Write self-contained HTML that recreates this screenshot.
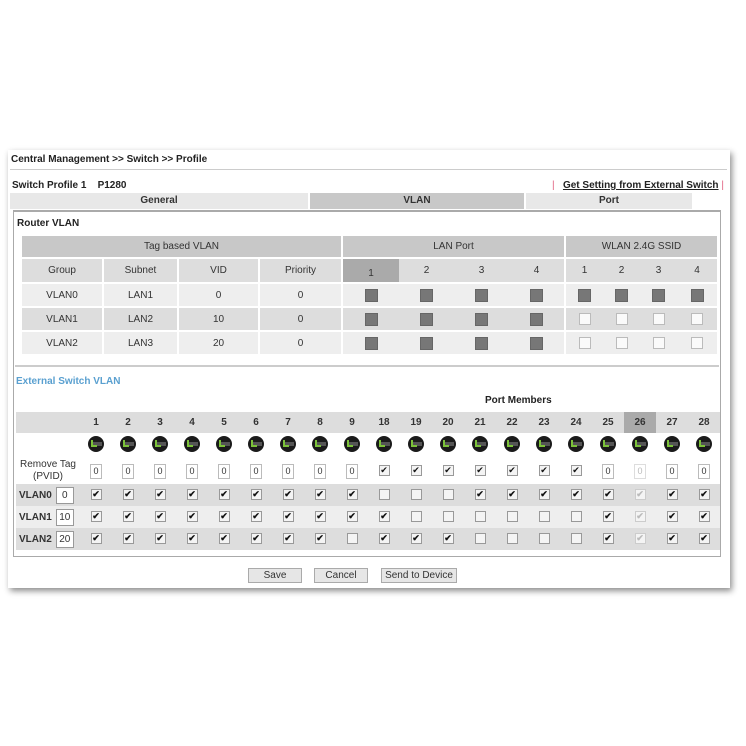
<!DOCTYPE html>
<html><head><meta charset="utf-8"><style>
*{box-sizing:border-box;margin:0;padding:0}
body{width:746px;height:746px;background:#fff;font-family:"Liberation Sans",sans-serif;font-size:10px;color:#333;position:relative;overflow:hidden}
.panel{position:absolute;left:8px;top:150px;width:722px;height:438px;background:#fff;box-shadow:2px 3px 6px rgba(0,0,0,.45)}
.a{position:absolute}
.bold{font-weight:bold;color:#222}
.tab{position:absolute;top:193px;height:16px;text-align:center;font-weight:bold;line-height:16px;color:#333}
.rv{border-collapse:separate;border-spacing:0;table-layout:fixed}
.rv td{text-align:center;height:24px;background:#eee;border-bottom:2px solid #fff;border-right:2px solid #fff;padding:0}
.rv td.in{border-right:0}
.rv .h td{background:#c8c8c8;height:23px}
.rv .h2 td{background:#ddd;height:25px}
.rv .d td{background:#ddd}
.sq{display:inline-block;width:13px;height:13px;background:#777;border:1px solid #666;vertical-align:middle}
.em{display:inline-block;width:12px;height:12px;background:#fafafa;border:1px solid #bbb;vertical-align:middle}
.ex{border-collapse:collapse;border-spacing:0}
.ex td{text-align:center;padding:0;font-size:10px}
.k,.u,.f{display:inline-block;width:11px;height:11px;border:1px solid #999;background:#f4f4f4;font-style:normal;font-size:9px;line-height:9px;color:#111;vertical-align:middle}
.f{color:#bbb;border-color:#ccc}
.n{display:inline-block;width:12px;height:15px;border:1px solid #bbb;background:#fff;font-weight:normal;font-size:9px;line-height:13px;color:#333;vertical-align:middle}
.btn{position:absolute;top:568px;height:15px;border:1px solid #aaa;background:#e6e6e6;text-align:center;line-height:13px;font-size:10px;color:#333}
.vi{display:inline-block;width:18px;height:17px;border:1px solid #999;background:#fff;line-height:15px;font-size:10px;font-weight:normal;text-align:center;margin-left:4px;vertical-align:middle}
</style></head><body>
<div class="panel"></div>
<div class="a bold" style="left:11px;top:154px;font-size:10px">Central Management &gt;&gt; Switch &gt;&gt; Profile</div>
<div class="a" style="left:10px;top:169px;width:717px;height:1px;background:#ccc"></div>
<div class="a bold" style="left:12px;top:180px">Switch Profile 1&nbsp;&nbsp;&nbsp; P1280</div>
<div class="a bold" style="left:552px;top:180px"><span style="color:#e06080;font-weight:normal">|</span>&nbsp;&nbsp; <u>Get Setting from External Switch</u> <span style="color:#e06080;font-weight:normal">|</span></div>
<div class="tab" style="left:10px;width:298px;background:#e8e8e8">General</div>
<div class="tab" style="left:310px;width:214px;background:#c8c8c8">VLAN</div>
<div class="tab" style="left:526px;width:166px;background:#e8e8e8">Port</div>
<div class="a" style="left:13px;top:210px;width:708px;height:347px;border:1px solid #aaa;border-top:2px solid #aaa"></div>
<div class="a bold" style="left:17px;top:218px">Router VLAN</div>

<table class="rv a" style="left:22px;top:236px;width:697px">
<colgroup><col style="width:82px"><col style="width:75px"><col style="width:81px"><col style="width:83px"><col style="width:56px"><col style="width:55px"><col style="width:55px"><col style="width:57px"><col style="width:37px"><col style="width:37px"><col style="width:37px"><col style="width:42px"></colgroup>
<tr class="h"><td colspan="4">Tag based VLAN</td><td colspan="4">LAN Port</td><td colspan="4">WLAN 2.4G SSID</td></tr>
<tr class="h2"><td>Group</td><td>Subnet</td><td>VID</td><td>Priority</td><td class="in" style="background:#aaa;vertical-align:bottom;padding-bottom:3px">1</td><td class="in">2</td><td class="in">3</td><td>4</td><td class="in">1</td><td class="in">2</td><td class="in">3</td><td>4</td></tr>
<tr><td>VLAN0</td><td>LAN1</td><td>0</td><td>0</td><td class="in"><span class="sq"></span></td><td class="in"><span class="sq"></span></td><td class="in"><span class="sq"></span></td><td><span class="sq"></span></td><td class="in"><span class="sq"></span></td><td class="in"><span class="sq"></span></td><td class="in"><span class="sq"></span></td><td><span class="sq"></span></td></tr>
<tr class="d"><td>VLAN1</td><td>LAN2</td><td>10</td><td>0</td><td class="in"><span class="sq"></span></td><td class="in"><span class="sq"></span></td><td class="in"><span class="sq"></span></td><td><span class="sq"></span></td><td class="in"><span class="em"></span></td><td class="in"><span class="em"></span></td><td class="in"><span class="em"></span></td><td><span class="em"></span></td></tr>
<tr><td>VLAN2</td><td>LAN3</td><td>20</td><td>0</td><td class="in"><span class="sq"></span></td><td class="in"><span class="sq"></span></td><td class="in"><span class="sq"></span></td><td><span class="sq"></span></td><td class="in"><span class="em"></span></td><td class="in"><span class="em"></span></td><td class="in"><span class="em"></span></td><td><span class="em"></span></td></tr>
</table>
<div class="a" style="left:15px;top:365px;width:704px;height:2px;background:#ccc"></div>
<div class="a bold" style="left:16px;top:376px;color:#5aa0d0">External Switch VLAN</div>
<div class="a bold" style="left:485px;top:395px">Port Members</div>

<table class="ex a" style="left:16px;top:412px;width:704px">
<colgroup><col style="width:64px"><col span="20" style="width:32px"></colgroup>
<tr style="height:21px;background:#ddd;font-weight:bold"><td></td><td>1</td><td>2</td><td>3</td><td>4</td><td>5</td><td>6</td><td>7</td><td>8</td><td>9</td><td>18</td><td>19</td><td>20</td><td>21</td><td>22</td><td>23</td><td>24</td><td>25</td><td style="background:#aaa">26</td><td>27</td><td>28</td></tr>
<tr style="height:25px"><td></td>
<td><svg width="16" height="16" viewBox="0 0 16 16"><circle cx="8" cy="8" r="8" fill="#1a1a1a"/><rect x="3" y="6" width="11" height="4" fill="#555"/><path d="M4 4v6h5" stroke="#7cc23a" stroke-width="2" fill="none"/></svg></td>
<td><svg width="16" height="16" viewBox="0 0 16 16"><circle cx="8" cy="8" r="8" fill="#1a1a1a"/><rect x="3" y="6" width="11" height="4" fill="#555"/><path d="M4 4v6h5" stroke="#7cc23a" stroke-width="2" fill="none"/></svg></td>
<td><svg width="16" height="16" viewBox="0 0 16 16"><circle cx="8" cy="8" r="8" fill="#1a1a1a"/><rect x="3" y="6" width="11" height="4" fill="#555"/><path d="M4 4v6h5" stroke="#7cc23a" stroke-width="2" fill="none"/></svg></td>
<td><svg width="16" height="16" viewBox="0 0 16 16"><circle cx="8" cy="8" r="8" fill="#1a1a1a"/><rect x="3" y="6" width="11" height="4" fill="#555"/><path d="M4 4v6h5" stroke="#7cc23a" stroke-width="2" fill="none"/></svg></td>
<td><svg width="16" height="16" viewBox="0 0 16 16"><circle cx="8" cy="8" r="8" fill="#1a1a1a"/><rect x="3" y="6" width="11" height="4" fill="#555"/><path d="M4 4v6h5" stroke="#7cc23a" stroke-width="2" fill="none"/></svg></td>
<td><svg width="16" height="16" viewBox="0 0 16 16"><circle cx="8" cy="8" r="8" fill="#1a1a1a"/><rect x="3" y="6" width="11" height="4" fill="#555"/><path d="M4 4v6h5" stroke="#7cc23a" stroke-width="2" fill="none"/></svg></td>
<td><svg width="16" height="16" viewBox="0 0 16 16"><circle cx="8" cy="8" r="8" fill="#1a1a1a"/><rect x="3" y="6" width="11" height="4" fill="#555"/><path d="M4 4v6h5" stroke="#7cc23a" stroke-width="2" fill="none"/></svg></td>
<td><svg width="16" height="16" viewBox="0 0 16 16"><circle cx="8" cy="8" r="8" fill="#1a1a1a"/><rect x="3" y="6" width="11" height="4" fill="#555"/><path d="M4 4v6h5" stroke="#7cc23a" stroke-width="2" fill="none"/></svg></td>
<td><svg width="16" height="16" viewBox="0 0 16 16"><circle cx="8" cy="8" r="8" fill="#1a1a1a"/><rect x="3" y="6" width="11" height="4" fill="#555"/><path d="M4 4v6h5" stroke="#7cc23a" stroke-width="2" fill="none"/></svg></td>
<td><svg width="16" height="16" viewBox="0 0 16 16"><circle cx="8" cy="8" r="8" fill="#1a1a1a"/><rect x="3" y="6" width="11" height="4" fill="#555"/><path d="M4 4v6h5" stroke="#7cc23a" stroke-width="2" fill="none"/></svg></td>
<td><svg width="16" height="16" viewBox="0 0 16 16"><circle cx="8" cy="8" r="8" fill="#1a1a1a"/><rect x="3" y="6" width="11" height="4" fill="#555"/><path d="M4 4v6h5" stroke="#7cc23a" stroke-width="2" fill="none"/></svg></td>
<td><svg width="16" height="16" viewBox="0 0 16 16"><circle cx="8" cy="8" r="8" fill="#1a1a1a"/><rect x="3" y="6" width="11" height="4" fill="#555"/><path d="M4 4v6h5" stroke="#7cc23a" stroke-width="2" fill="none"/></svg></td>
<td><svg width="16" height="16" viewBox="0 0 16 16"><circle cx="8" cy="8" r="8" fill="#1a1a1a"/><rect x="3" y="6" width="11" height="4" fill="#555"/><path d="M4 4v6h5" stroke="#7cc23a" stroke-width="2" fill="none"/></svg></td>
<td><svg width="16" height="16" viewBox="0 0 16 16"><circle cx="8" cy="8" r="8" fill="#1a1a1a"/><rect x="3" y="6" width="11" height="4" fill="#555"/><path d="M4 4v6h5" stroke="#7cc23a" stroke-width="2" fill="none"/></svg></td>
<td><svg width="16" height="16" viewBox="0 0 16 16"><circle cx="8" cy="8" r="8" fill="#1a1a1a"/><rect x="3" y="6" width="11" height="4" fill="#555"/><path d="M4 4v6h5" stroke="#7cc23a" stroke-width="2" fill="none"/></svg></td>
<td><svg width="16" height="16" viewBox="0 0 16 16"><circle cx="8" cy="8" r="8" fill="#1a1a1a"/><rect x="3" y="6" width="11" height="4" fill="#555"/><path d="M4 4v6h5" stroke="#7cc23a" stroke-width="2" fill="none"/></svg></td>
<td><svg width="16" height="16" viewBox="0 0 16 16"><circle cx="8" cy="8" r="8" fill="#1a1a1a"/><rect x="3" y="6" width="11" height="4" fill="#555"/><path d="M4 4v6h5" stroke="#7cc23a" stroke-width="2" fill="none"/></svg></td>
<td><svg width="16" height="16" viewBox="0 0 16 16"><circle cx="8" cy="8" r="8" fill="#1a1a1a"/><rect x="3" y="6" width="11" height="4" fill="#555"/><path d="M4 4v6h5" stroke="#7cc23a" stroke-width="2" fill="none"/></svg></td>
<td><svg width="16" height="16" viewBox="0 0 16 16"><circle cx="8" cy="8" r="8" fill="#1a1a1a"/><rect x="3" y="6" width="11" height="4" fill="#555"/><path d="M4 4v6h5" stroke="#7cc23a" stroke-width="2" fill="none"/></svg></td>
<td><svg width="16" height="16" viewBox="0 0 16 16"><circle cx="8" cy="8" r="8" fill="#1a1a1a"/><rect x="3" y="6" width="11" height="4" fill="#555"/><path d="M4 4v6h5" stroke="#7cc23a" stroke-width="2" fill="none"/></svg></td>
</tr>
<tr style="height:26px"><td style="line-height:12px">Remove Tag<br>(PVID)</td>
<td><b class="n">0</b></td><td><b class="n">0</b></td><td><b class="n">0</b></td><td><b class="n">0</b></td><td><b class="n">0</b></td><td><b class="n">0</b></td><td><b class="n">0</b></td><td><b class="n">0</b></td><td><b class="n">0</b></td>
<td><i class="k">✔</i></td><td><i class="k">✔</i></td><td><i class="k">✔</i></td><td><i class="k">✔</i></td><td><i class="k">✔</i></td><td><i class="k">✔</i></td><td><i class="k">✔</i></td>
<td><b class="n">0</b></td><td><b class="n" style="color:#bbb;border-color:#ddd">0</b></td><td><b class="n">0</b></td><td><b class="n">0</b></td></tr>
<tr style="height:22px;background:#ddd;font-weight:bold"><td style="text-align:left;padding-left:3px">VLAN0<span class="vi">0</span></td>
<td><i class="k">✔</i></td><td><i class="k">✔</i></td><td><i class="k">✔</i></td><td><i class="k">✔</i></td><td><i class="k">✔</i></td><td><i class="k">✔</i></td><td><i class="k">✔</i></td><td><i class="k">✔</i></td><td><i class="k">✔</i></td>
<td><i class="u"></i></td><td><i class="u"></i></td><td><i class="u"></i></td><td><i class="k">✔</i></td><td><i class="k">✔</i></td><td><i class="k">✔</i></td><td><i class="k">✔</i></td><td><i class="k">✔</i></td><td><i class="f">✔</i></td><td><i class="k">✔</i></td><td><i class="k">✔</i></td></tr>
<tr style="height:22px;background:#eee;font-weight:bold"><td style="text-align:left;padding-left:3px">VLAN1<span class="vi">10</span></td>
<td><i class="k">✔</i></td><td><i class="k">✔</i></td><td><i class="k">✔</i></td><td><i class="k">✔</i></td><td><i class="k">✔</i></td><td><i class="k">✔</i></td><td><i class="k">✔</i></td><td><i class="k">✔</i></td><td><i class="k">✔</i></td>
<td><i class="k">✔</i></td><td><i class="u"></i></td><td><i class="u"></i></td><td><i class="u"></i></td><td><i class="u"></i></td><td><i class="u"></i></td><td><i class="u"></i></td><td><i class="k">✔</i></td><td><i class="f">✔</i></td><td><i class="k">✔</i></td><td><i class="k">✔</i></td></tr>
<tr style="height:22px;background:#ddd;font-weight:bold"><td style="text-align:left;padding-left:3px">VLAN2<span class="vi">20</span></td>
<td><i class="k">✔</i></td><td><i class="k">✔</i></td><td><i class="k">✔</i></td><td><i class="k">✔</i></td><td><i class="k">✔</i></td><td><i class="k">✔</i></td><td><i class="k">✔</i></td><td><i class="k">✔</i></td><td><i class="u"></i></td>
<td><i class="k">✔</i></td><td><i class="k">✔</i></td><td><i class="k">✔</i></td><td><i class="u"></i></td><td><i class="u"></i></td><td><i class="u"></i></td><td><i class="u"></i></td><td><i class="k">✔</i></td><td><i class="f">✔</i></td><td><i class="k">✔</i></td><td><i class="k">✔</i></td></tr>
</table>

<div class="btn" style="left:248px;width:54px">Save</div>
<div class="btn" style="left:314px;width:54px">Cancel</div>
<div class="btn" style="left:381px;width:76px">Send to Device</div>
</body></html>
